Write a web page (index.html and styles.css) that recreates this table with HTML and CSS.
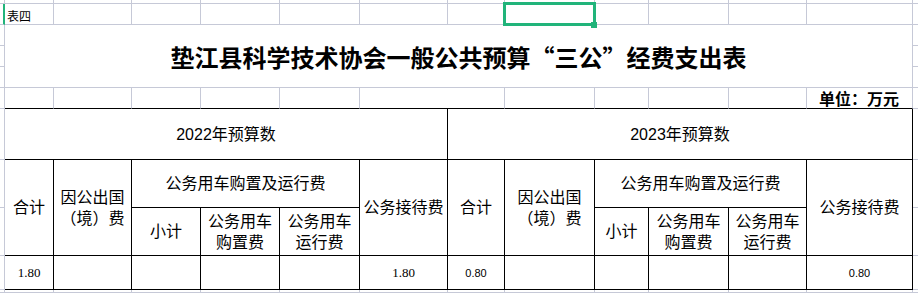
FILE: index.html
```html
<!DOCTYPE html>
<html lang="zh-CN">
<head>
<meta charset="utf-8">
<title>垫江县科学技术协会一般公共预算“三公”经费支出表</title>
<link rel="stylesheet" href="styles.css">
</head>
<body>
<div class="sheet">
  <!-- row 0 -->
  <div class="c"></div><div class="c"></div><div class="c"></div><div class="c"></div><div class="c"></div><div class="c"></div><div class="c"></div>
  <div class="c"></div><div class="c"></div><div class="c"></div><div class="c"></div><div class="c"></div><div class="c"></div><div class="c edge"></div>
  <!-- row 1 -->
  <div class="c active-row"></div>
  <div class="c note">表四</div>
  <div class="c"></div><div class="c"></div><div class="c"></div><div class="c"></div><div class="c"></div><div class="c"></div>
  <div class="c"></div><div class="c"></div><div class="c"></div><div class="c"></div><div class="c"></div>
  <div class="c edge"></div>
  <!-- rows 2-4 -->
  <div class="c"></div>
  <div class="c title">垫江县科学技术协会一般公共预算<span class="q">“</span>三公<span class="q">”</span>经费支出表</div>
  <div class="c edge"></div>
  <div class="c"></div><div class="c edge"></div>
  <div class="c"></div><div class="c edge"></div>
  <!-- row 5 -->
  <div class="c"></div>
  <div class="c top"></div><div class="c top"></div><div class="c top"></div><div class="c top"></div><div class="c top"></div>
  <div class="c top span2"></div>
  <div class="c top"></div><div class="c top"></div><div class="c top"></div><div class="c top"></div>
  <div class="c top unit">单位：万元</div>
  <div class="c edge"></div>
  <!-- row 6 -->
  <div class="c"></div>
  <div class="c t head span6">2022年预算数</div>
  <div class="c t head span6">2023年预算数</div>
  <div class="c edge"></div>
  <!-- row 7 -->
  <div class="c"></div>
  <div class="c t head rs2">合计</div>
  <div class="c t head rs2">因公出国<br>（境）费</div>
  <div class="c t head span3">公务用车购置及运行费</div>
  <div class="c t head rs2">公务接待费</div>
  <div class="c t head rs2">合计</div>
  <div class="c t head rs2">因公出国<br>（境）费</div>
  <div class="c t head span3">公务用车购置及运行费</div>
  <div class="c t head rs2">公务接待费</div>
  <div class="c edge"></div>
  <!-- row 8 -->
  <div class="c"></div>
  <div class="c t head">小计</div>
  <div class="c t head">公务用车<br>购置费</div>
  <div class="c t head">公务用车<br>运行费</div>
  <div class="c t head">小计</div>
  <div class="c t head">公务用车<br>购置费</div>
  <div class="c t head">公务用车<br>运行费</div>
  <div class="c edge"></div>
  <!-- row 9 -->
  <div class="c"></div>
  <div class="c t num serif">1.80</div>
  <div class="c t"></div><div class="c t"></div><div class="c t"></div><div class="c t"></div>
  <div class="c t num serif">1.80</div>
  <div class="c t num">0.80</div>
  <div class="c t"></div><div class="c t"></div><div class="c t"></div><div class="c t"></div>
  <div class="c t num">0.80</div>
  <div class="c edge"></div>
  <!-- row 10 -->
  <div class="c"></div><div class="c"></div><div class="c"></div><div class="c"></div><div class="c"></div><div class="c"></div><div class="c"></div>
  <div class="c"></div><div class="c"></div><div class="c"></div><div class="c"></div><div class="c"></div><div class="c"></div><div class="c edge"></div>

  <div class="selection"><span class="handle"></span></div>
</div>
</body>
</html>
```
FILE: styles.css
```css
html, body {
  margin: 0;
  padding: 0;
  background: #fff;
  overflow: hidden;
}

.sheet {
  position: relative;
  display: grid;
  grid-template-columns: 5px 49px 78px 69px 79px 80px 88px 57px 90px 54px 80px 78px 106px 5px;
  grid-template-rows: 4px 21px 21px 21px 21px 21px 51px 48px 48px 34px 3px;
  width: 918px;
  height: 293px;
  font-family: "Liberation Sans", "Noto Sans CJK SC", sans-serif;
  color: #000;
}

.c {
  box-sizing: border-box;
  border-right: 1px solid #c6c9d7;
  border-bottom: 1px solid #c6c9d7;
  min-width: 0;
  min-height: 0;
}

.edge {
  border-right: none;
}

.active-row {
  border-right: 2px solid #21b47a;
}

.note {
  display: flex;
  align-items: center;
  font-family: "Noto Sans CJK SC", sans-serif;
  font-size: 12px;
  padding: 2px 0 0 2px;
  white-space: nowrap;
}

.title {
  grid-column: span 12;
  grid-row: span 3;
  display: flex;
  align-items: center;
  justify-content: center;
  font-family: "Noto Sans CJK SC", sans-serif;
  font-weight: 700;
  font-size: 24px;
  white-space: nowrap;
}

.title .q {
  font-feature-settings: "fwid" 1;
}

.top {
  border-bottom-color: #000;
}

.span2 { grid-column: span 2; }
.span3 { grid-column: span 3; }
.span6 { grid-column: span 6; }
.rs2 { grid-row: span 2; }

.unit {
  display: flex;
  align-items: center;
  justify-content: flex-end;
  padding-right: 13px;
  font-family: "Noto Sans CJK SC", sans-serif;
  font-weight: 700;
  font-size: 16px;
  white-space: nowrap;
}

.t {
  border-right-color: #000;
  border-bottom-color: #000;
}

.head {
  display: flex;
  align-items: center;
  justify-content: center;
  text-align: center;
  font-size: 16px;
  line-height: 21px;
  white-space: nowrap;
}

.num {
  display: flex;
  align-items: center;
  justify-content: center;
  font-family: "Liberation Sans", sans-serif;
  font-size: 11px;
}

.num.serif {
  font-family: "Liberation Serif", serif;
  font-size: 13px;
}

.selection {
  position: absolute;
  left: 503px;
  top: 2px;
  width: 93px;
  height: 24px;
  box-sizing: border-box;
  border: 3px solid #21b47a;
}

.handle {
  position: absolute;
  right: -4px;
  bottom: -5px;
  width: 6px;
  height: 6px;
  background: #21b47a;
}
```
